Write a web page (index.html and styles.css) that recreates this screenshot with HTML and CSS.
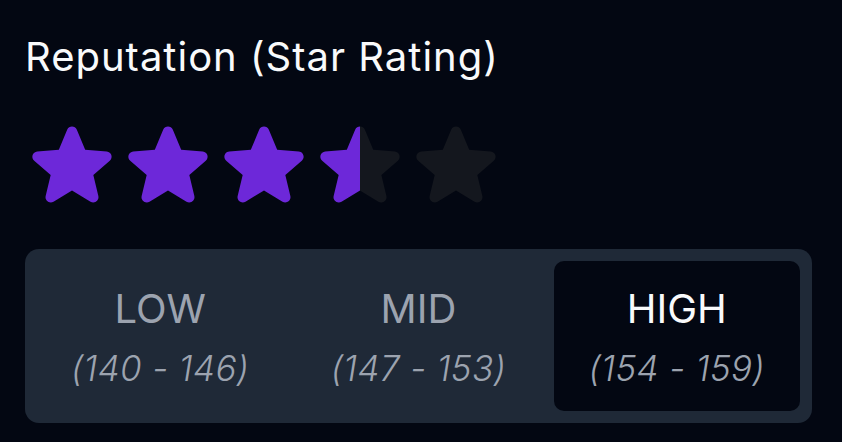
FILE: index.html
```html
<!DOCTYPE html>
<html lang="en">
<head>
    <meta charset="UTF-8">
    <meta name="viewport" content="width=device-width, initial-scale=1.0">
    <title>Reputation</title>
    <link rel="stylesheet" href="styles.css">
</head>
<body>
    <div id="reputation-card">
        <h2 class="title">Reputation (Star Rating)</h2>

        <div class="stars">
            <svg class="star full" viewBox="0 0 24 24"><path d="M10.788 3.21c.448-1.077 1.976-1.077 2.424 0l2.082 5.006 5.404.434c1.164.093 1.636 1.545.749 2.305l-4.117 3.527 1.257 5.273c.271 1.136-.964 2.033-1.96 1.425L12 18.354 7.373 21.18c-.996.608-2.231-.29-1.96-1.425l1.257-5.273-4.117-3.527c-.887-.76-.415-2.212.749-2.305l5.404-.434 2.082-5.005Z"/></svg>
            <svg class="star full" viewBox="0 0 24 24"><path d="M10.788 3.21c.448-1.077 1.976-1.077 2.424 0l2.082 5.006 5.404.434c1.164.093 1.636 1.545.749 2.305l-4.117 3.527 1.257 5.273c.271 1.136-.964 2.033-1.96 1.425L12 18.354 7.373 21.18c-.996.608-2.231-.29-1.96-1.425l1.257-5.273-4.117-3.527c-.887-.76-.415-2.212.749-2.305l5.404-.434 2.082-5.005Z"/></svg>
            <svg class="star full" viewBox="0 0 24 24"><path d="M10.788 3.21c.448-1.077 1.976-1.077 2.424 0l2.082 5.006 5.404.434c1.164.093 1.636 1.545.749 2.305l-4.117 3.527 1.257 5.273c.271 1.136-.964 2.033-1.96 1.425L12 18.354 7.373 21.18c-.996.608-2.231-.29-1.96-1.425l1.257-5.273-4.117-3.527c-.887-.76-.415-2.212.749-2.305l5.404-.434 2.082-5.005Z"/></svg>
            <svg class="star" viewBox="0 0 24 24">
                <defs>
                    <linearGradient id="half-fill" gradientUnits="userSpaceOnUse" x1="0" y1="0" x2="24" y2="0">
                        <stop offset="50%" stop-color="#6d28d9"/>
                        <stop offset="50%" stop-color="#14171e"/>
                    </linearGradient>
                </defs>
                <path fill="url(#half-fill)" d="M10.788 3.21c.448-1.077 1.976-1.077 2.424 0l2.082 5.006 5.404.434c1.164.093 1.636 1.545.749 2.305l-4.117 3.527 1.257 5.273c.271 1.136-.964 2.033-1.96 1.425L12 18.354 7.373 21.18c-.996.608-2.231-.29-1.96-1.425l1.257-5.273-4.117-3.527c-.887-.76-.415-2.212.749-2.305l5.404-.434 2.082-5.005Z"/>
            </svg>
            <svg class="star empty" viewBox="0 0 24 24"><path d="M10.788 3.21c.448-1.077 1.976-1.077 2.424 0l2.082 5.006 5.404.434c1.164.093 1.636 1.545.749 2.305l-4.117 3.527 1.257 5.273c.271 1.136-.964 2.033-1.96 1.425L12 18.354 7.373 21.18c-.996.608-2.231-.29-1.96-1.425l1.257-5.273-4.117-3.527c-.887-.76-.415-2.212.749-2.305l5.404-.434 2.082-5.005Z"/></svg>
        </div>

        <div class="tiers">
            <div class="tier">
                <span class="tier-name">LOW</span>
                <span class="tier-range">(140 - 146)</span>
            </div>
            <div class="tier">
                <span class="tier-name">MID</span>
                <span class="tier-range">(147 - 153)</span>
            </div>
            <div class="tier active">
                <span class="tier-name">HIGH</span>
                <span class="tier-range">(154 - 159)</span>
            </div>
        </div>
    </div>
</body>
</html>
```

FILE: styles.css
```css
body, html {
    margin: 0;
    padding: 0;
    height: 100%;
    background: #030712;
    font-family: Inter, 'Noto Sans', sans-serif;
}
#reputation-card {
    padding: 33px 30px 0 25px;
}
.title {
    margin: 0;
    font-size: 40px;
    font-weight: 400;
    line-height: 48px;
    letter-spacing: 1px;
    color: #f9fafb;
}
.stars {
    display: flex;
    margin: 36px 0 36px -1px;
}
.star {
    width: 96px;
    height: 96px;
    display: block;
}
.star.full {
    fill: #6d28d9;
}
.star.empty {
    fill: #14171e;
}
.tiers {
    display: flex;
    gap: 12px;
    padding: 12px;
    background: #1f2937;
    border-radius: 14px;
}
.tier {
    flex: 1;
    height: 150px;
    border-radius: 10px;
    display: flex;
    flex-direction: column;
    align-items: center;
    justify-content: center;
    color: #9ca3af;
}
.tier.active {
    background: #030712;
}
.tier-name {
    font-size: 40px;
    line-height: 48px;
    font-weight: 400;
}
.tier.active .tier-name {
    color: #f9fafb;
}
.tier-range {
    margin-top: 15px;
    font-size: 35px;
    line-height: 40px;
    letter-spacing: 0.4px;
    font-style: italic;
    font-weight: 300;
}
```
